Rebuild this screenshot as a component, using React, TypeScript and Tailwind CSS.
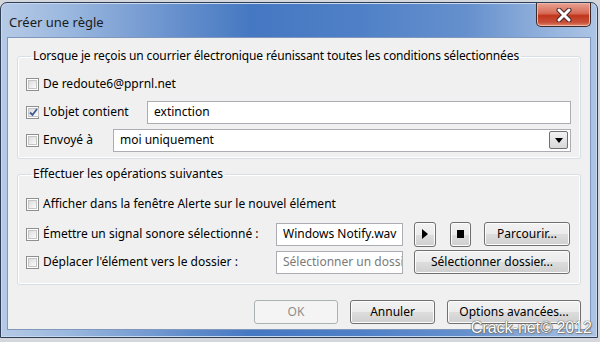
import type { ReactNode } from "react";

const FONT = "font-['Noto_Sans','Open_Sans',sans-serif]";

function Check({ checked = false }: { checked?: boolean }) {
  return (
    <span className="w-[13px] h-[13px] shrink-0 border border-[#8e8f8f] bg-white p-px flex">
      <span className="flex-1 flex items-center justify-center bg-[linear-gradient(135deg,#dcdcdc,#fbfbfb)] border border-[#c5c5c5]">
        {checked && (
          <svg width="9" height="9" viewBox="0 0 9 9">
            <path d="M1 4.5 L3.5 7 L8 1" fill="none" stroke="#3d5b93" strokeWidth="1.8" />
          </svg>
        )}
      </span>
    </span>
  );
}

function Btn({
  children,
  disabled = false,
  className = "",
}: {
  children: ReactNode;
  disabled?: boolean;
  className?: string;
}) {
  return (
    <div
      className={
        "h-[24px] flex items-center justify-center rounded-[3px] border " +
        (disabled
          ? "border-[#adb2b5] bg-[#f4f4f4] text-[#8d8d8d] "
          : "border-[#707070] bg-[linear-gradient(#f2f2f2_0%,#ebebeb_50%,#dddddd_51%,#cfcfcf_100%)] text-black shadow-[inset_0_0_0_1px_#fcfcfc] ") +
        className
      }
    >
      {children}
    </div>
  );
}

function Field({
  children,
  className = "",
}: {
  children: ReactNode;
  className?: string;
}) {
  return (
    <div
      className={
        "h-[23px] flex items-center bg-white border border-[#abadb3] px-[6px] overflow-hidden whitespace-nowrap " +
        className
      }
    >
      {children}
    </div>
  );
}

export default function App() {
  return (
    <div
      className={`${FONT} relative w-[600px] h-[342px] overflow-hidden bg-[#d4d8dc] pt-[2px] pr-[2px] pb-[4px] text-[12px] text-black`}
    >
      {/* window */}
      <div className="h-full flex flex-col rounded-t-[7px] border border-[#2f3f58] bg-[linear-gradient(90deg,#b6cae6_0%,#98b6de_12%,#658fcc_30%,#4578c2_42%,#4f80c7_60%,#6590cd_78%,#94b3dd_92%,#adc4e4_100%)] px-[6px] pb-[7px] shadow-[inset_0_0_0_1px_#c7d8ef]">
        {/* title bar */}
        <div className="h-[34px] flex items-start">
          <span className="mt-[10px] ml-[2px] text-[13px] text-[#1b1b1b]">
            Créer une règle
          </span>
          <div className="ml-auto w-[55px] h-[24px] rounded-b-[5px] border border-t-0 border-[#3b2a2a] bg-[linear-gradient(#e8a293_0%,#d66b57_45%,#c2351c_55%,#c9513b_85%,#e08b6e_100%)] flex items-center justify-center shadow-[inset_0_0_0_1px_#f0b7a8]">
            <svg width="16" height="14" viewBox="0 0 16 14">
              <path
                d="M3 2 L13 12 M13 2 L3 12"
                stroke="#4a2a2a"
                strokeWidth="5"
                strokeLinecap="round"
              />
              <path
                d="M3 2 L13 12 M13 2 L3 12"
                stroke="#ffffff"
                strokeWidth="3"
                strokeLinecap="round"
              />
            </svg>
          </div>
        </div>

        {/* client area */}
        <div className="flex-1 flex flex-col bg-[#f0f0f0] border border-[#7f97bd] px-[9px]">
          <fieldset className="mt-[9px] border border-[#d5dfe5] rounded-[3px] px-[8px] pb-[6px] shadow-[inset_0_0_0_1px_#fff]">
            <legend className="ml-[5px] px-[2px] tracking-[-0.13px]">
              Lorsque je reçois un courrier électronique réunissant toutes les conditions sélectionnées
            </legend>
            <div className="pt-[7px] pr-[1px] flex flex-col gap-[4px]">
              <div className="h-[24px] flex items-center">
                <Check />
                <span className="ml-[4px]">De redoute6@pprnl.net</span>
              </div>
              <div className="h-[24px] flex items-center">
                <div className="w-[121px] flex items-center">
                  <Check checked />
                  <span className="ml-[4px]">L&apos;objet contient</span>
                </div>
                <Field className="flex-1 h-[22px]">extinction</Field>
              </div>
              <div className="h-[24px] flex items-center">
                <div className="w-[87px] flex items-center">
                  <Check />
                  <span className="ml-[4px]">Envoyé à</span>
                </div>
                <Field className="flex-1 pr-[2px]">
                  <span className="flex-1">moi uniquement</span>
                  <span className="w-[19px] h-[18px] border border-[#707070] rounded-[2px] bg-[linear-gradient(#f2f2f2,#d8d8d8)] flex items-center justify-center">
                    <svg width="8" height="5" viewBox="0 0 8 5">
                      <path d="M0 0 H8 L4 5 Z" fill="#000" />
                    </svg>
                  </span>
                </Field>
              </div>
            </div>
          </fieldset>

          <fieldset className="mt-[6px] border border-[#d5dfe5] rounded-[3px] px-[8px] pb-[10px] shadow-[inset_0_0_0_1px_#fff]">
            <legend className="ml-[5px] px-[2px]">
              Effectuer les opérations suivantes
            </legend>
            <div className="pt-[9px] pr-[2px] flex flex-col">
              <div className="h-[24px] flex items-center">
                <Check />
                <span className="ml-[4px]">
                  Afficher dans la fenêtre Alerte sur le nouvel élément
                </span>
              </div>
              <div className="mt-[6px] h-[24px] flex items-center">
                <div className="flex-1 flex items-center">
                  <Check />
                  <span className="ml-[4px]">Émettre un signal sonore sélectionné :</span>
                </div>
                <Field className="w-[127px] px-[4px]">Windows Notify.wav</Field>
                <Btn className="ml-[11px] w-[22px] h-[25px]">
                  <svg width="6" height="10" viewBox="0 0 6 10">
                    <path d="M0 0 L6 5 L0 10 Z" fill="#000" />
                  </svg>
                </Btn>
                <Btn className="ml-[14px] w-[21px] h-[25px]">
                  <span className="w-[7px] h-[8px] bg-black" />
                </Btn>
                <Btn className="ml-[13px] w-[86px]">Parcourir...</Btn>
              </div>
              <div className="mt-[4px] h-[24px] flex items-center">
                <div className="flex-1 flex items-center">
                  <Check />
                  <span className="ml-[4px]">Déplacer l&apos;élément vers le dossier :</span>
                </div>
                <Field className="w-[127px] px-[4px] border-[#9ec2e6] text-[#7a7a7a]">
                  Sélectionner un dossier
                </Field>
                <Btn className="ml-[11px] w-[156px]">Sélectionner dossier...</Btn>
              </div>
            </div>
          </fieldset>

          <div className="mt-[15px] flex justify-end gap-[12px]">
            <Btn disabled className="w-[84px]">
              OK
            </Btn>
            <Btn className="w-[85px]">Annuler</Btn>
            <Btn className="w-[134px]">Options avancées...</Btn>
          </div>
        </div>
      </div>

      {/* watermark */}
      <span className="absolute right-[8px] bottom-[2px] font-['Liberation_Sans',Arial,sans-serif] text-[16px] text-white [text-shadow:0_0_1px_#444,0_0_1px_#444,1px_1px_1px_#888]">
        Crack-net© 2012
      </span>
    </div>
  );
}
